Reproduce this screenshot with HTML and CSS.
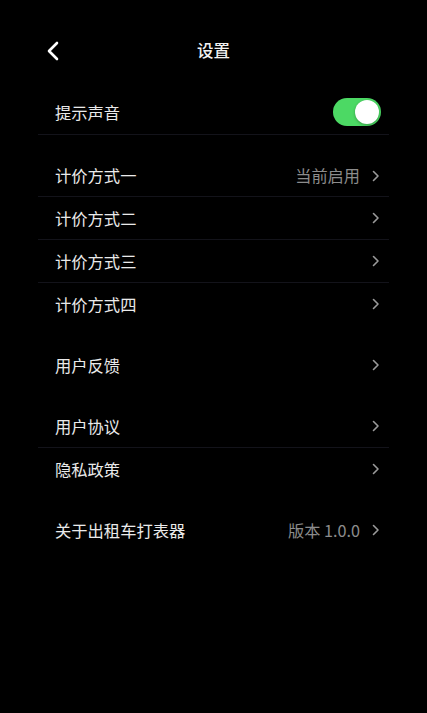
FILE: index.html
```html
<!DOCTYPE html>
<html lang="zh">
<head>
<meta charset="utf-8">
<title>设置</title>
<link rel="stylesheet" href="styles.css">
</head>
<body>
<div class="page">
  <header class="topbar">
    <button class="back" aria-label="返回">
      <svg width="14" height="20" viewBox="0 0 14 20"><path d="M11 2 L3 10 L11 18" fill="none" stroke="#fff" stroke-width="2.6" stroke-linecap="round" stroke-linejoin="round"/></svg>
    </button>
    <h1 class="title">设置</h1>
  </header>

  <section class="group g1 sep-bottom">
    <div class="row">
      <span class="label">提示声音</span>
      <span class="toggle"><span class="knob"></span></span>
    </div>
  </section>

  <section class="group g2">
    <div class="row line"><span class="label">计价方式一</span><span class="right"><span class="value">当前启用</span><svg class="chev" viewBox="0 0 8 12"><path d="M1.5 1.5 L6 6 L1.5 10.5" fill="none" stroke="#9a9a9a" stroke-width="1.6" stroke-linecap="round" stroke-linejoin="round"/></svg></span></div>
    <div class="row line"><span class="label">计价方式二</span><span class="right"><svg class="chev" viewBox="0 0 8 12"><path d="M1.5 1.5 L6 6 L1.5 10.5" fill="none" stroke="#9a9a9a" stroke-width="1.6" stroke-linecap="round" stroke-linejoin="round"/></svg></span></div>
    <div class="row line"><span class="label">计价方式三</span><span class="right"><svg class="chev" viewBox="0 0 8 12"><path d="M1.5 1.5 L6 6 L1.5 10.5" fill="none" stroke="#9a9a9a" stroke-width="1.6" stroke-linecap="round" stroke-linejoin="round"/></svg></span></div>
    <div class="row"><span class="label">计价方式四</span><span class="right"><svg class="chev" viewBox="0 0 8 12"><path d="M1.5 1.5 L6 6 L1.5 10.5" fill="none" stroke="#9a9a9a" stroke-width="1.6" stroke-linecap="round" stroke-linejoin="round"/></svg></span></div>
  </section>

  <section class="group g3">
    <div class="row"><span class="label">用户反馈</span><span class="right"><svg class="chev" viewBox="0 0 8 12"><path d="M1.5 1.5 L6 6 L1.5 10.5" fill="none" stroke="#9a9a9a" stroke-width="1.6" stroke-linecap="round" stroke-linejoin="round"/></svg></span></div>
  </section>

  <section class="group g4">
    <div class="row line"><span class="label">用户协议</span><span class="right"><svg class="chev" viewBox="0 0 8 12"><path d="M1.5 1.5 L6 6 L1.5 10.5" fill="none" stroke="#9a9a9a" stroke-width="1.6" stroke-linecap="round" stroke-linejoin="round"/></svg></span></div>
    <div class="row"><span class="label">隐私政策</span><span class="right"><svg class="chev" viewBox="0 0 8 12"><path d="M1.5 1.5 L6 6 L1.5 10.5" fill="none" stroke="#9a9a9a" stroke-width="1.6" stroke-linecap="round" stroke-linejoin="round"/></svg></span></div>
  </section>

  <section class="group g5">
    <div class="row"><span class="label">关于出租车打表器</span><span class="right"><span class="value">版本 1.0.0</span><svg class="chev" viewBox="0 0 8 12"><path d="M1.5 1.5 L6 6 L1.5 10.5" fill="none" stroke="#9a9a9a" stroke-width="1.6" stroke-linecap="round" stroke-linejoin="round"/></svg></span></div>
  </section>
</div>
</body>
</html>
```

FILE: styles.css
```css
html, body {
  margin: 0;
  padding: 0;
  background: #000;
}
body {
  font-family: "Noto Sans CJK SC", "Noto Sans", sans-serif;
  color: #ececec;
  width: 427px;
  height: 713px;
  overflow: hidden;
}
.page {
  padding: 28px 38px 0 38px;
}
.topbar {
  position: relative;
  height: 44px;
  display: flex;
  align-items: center;
  justify-content: center;
}
.back {
  position: absolute;
  left: 8px;
  top: 13px;
  background: none;
  border: 0;
  padding: 0;
  width: 14px;
  height: 20px;
  display: flex;
}
.title {
  margin: 0;
  font-size: 16.5px;
  font-weight: 500;
  color: #f2f2f2;
  line-height: 44px;
}
.g1 { margin-top: 19px; }
.g2 { margin-top: 20px; }
.g3 { margin-top: 18px; }
.g4 { margin-top: 19px; }
.g5 { margin-top: 18px; }
.sep-bottom {
  border-bottom: 1px solid #13131a;
}
.row {
  height: 42.7px;
  display: flex;
  align-items: center;
  justify-content: space-between;
  padding: 0 9px 0 17px;
  box-sizing: border-box;
}
.row.line {
  border-bottom: 1px solid #13131a;
}
.label {
  font-size: 16.3px;
  line-height: 1;
  color: #eaeaea;
}
.right {
  display: flex;
  align-items: center;
  gap: 12px;
}
.value {
  font-size: 16.2px;
  line-height: 1;
  color: #8c8c8c;
}
.chev {
  width: 8px;
  height: 12px;
  display: block;
}
.toggle {
  width: 48px;
  height: 28px;
  border-radius: 14px;
  background: #4cd964;
  position: relative;
  margin-right: -1px;
}
.knob {
  position: absolute;
  right: 2px;
  top: 2px;
  width: 24px;
  height: 24px;
  border-radius: 50%;
  background: #fff;
  box-shadow: 0 1px 3px rgba(0,0,0,0.3);
}
```
